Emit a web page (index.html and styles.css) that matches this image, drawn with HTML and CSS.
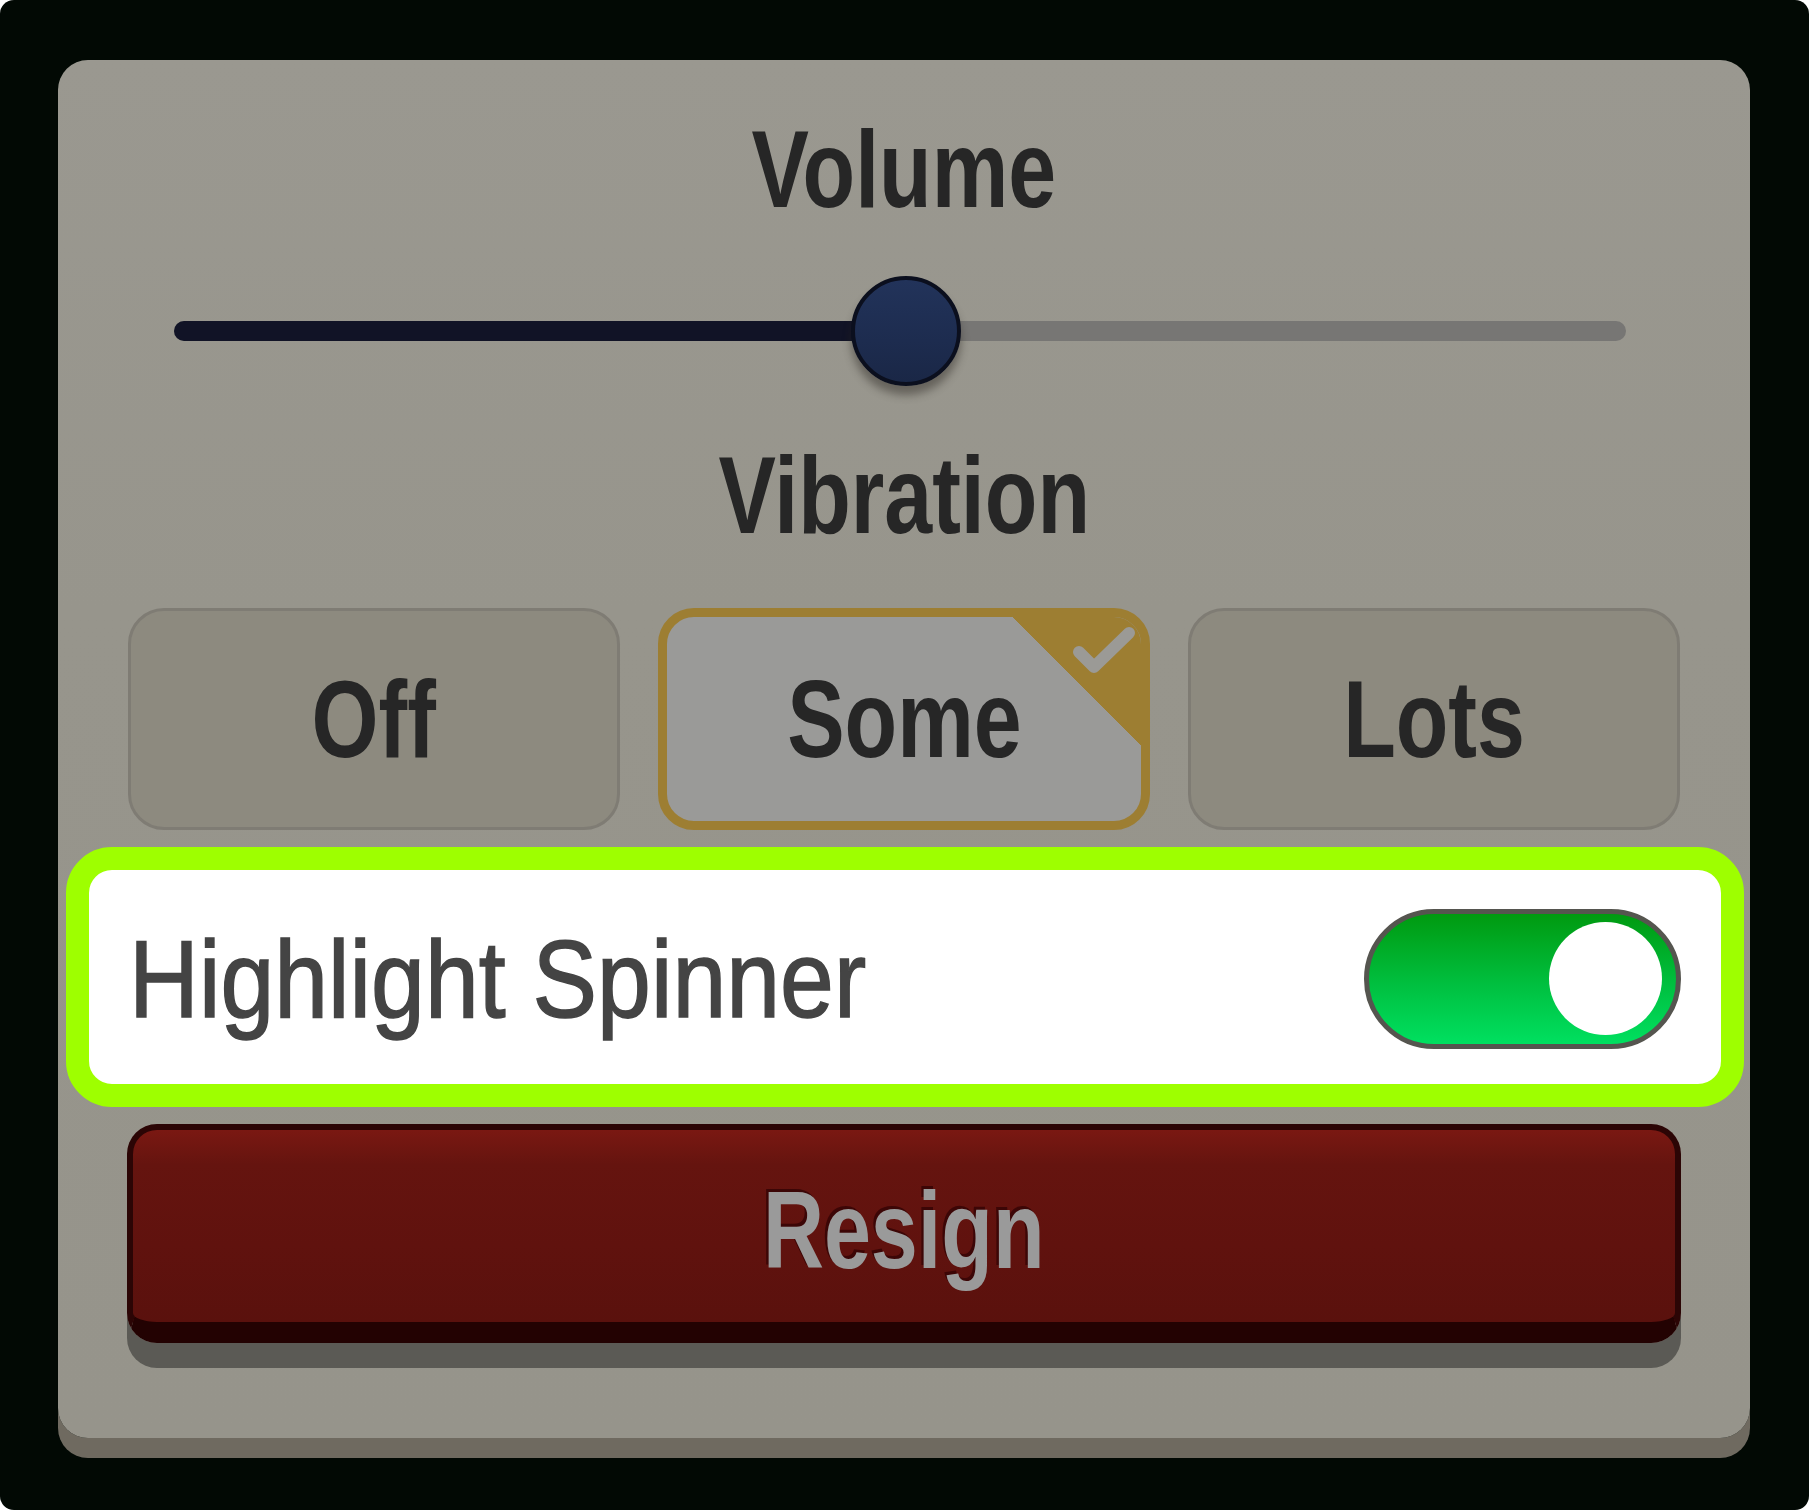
FILE: index.html
```html
<!DOCTYPE html>
<html>
<head>
<meta charset="utf-8">
<link rel="stylesheet" href="styles.css">
</head>
<body>
<div class="screen">
  <div class="panel">
    <h2 class="title"><span class="cond">Volume</span></h2>
    <div class="slider">
      <div class="track">
        <div class="track-fill" style="width:50.4%"></div>
      </div>
      <div class="knob" style="left:50.4%"></div>
    </div>
    <h2 class="title title-vibration"><span class="cond">Vibration</span></h2>
    <div class="choices">
      <div class="choice"><span class="cond">Off</span></div>
      <div class="choice choice-selected">
        <span class="corner"></span>
        <svg class="check" width="80" height="70" viewBox="0 0 80 70"><path d="M18 35 L33 50 L68 16" fill="none" stroke="#9b9a96" stroke-width="12" stroke-linecap="round" stroke-linejoin="round"/></svg>
        <span class="cond">Some</span>
      </div>
      <div class="choice"><span class="cond">Lots</span></div>
    </div>
    <div class="setting-row">
      <span class="setting-label">Highlight Spinner</span>
      <div class="toggle"><div class="toggle-knob"></div></div>
    </div>
    <div class="resign-wrap">
      <div class="resign"><span class="cond cond-resign">Resign</span></div>
    </div>
  </div>
</div>
</body>
</html>
```

FILE: styles.css
```css
html, body {
  margin: 0;
  padding: 0;
  background: #ffffff;
}
body {
  width: 1809px;
  height: 1510px;
  overflow: hidden;
}
.screen {
  width: 1809px;
  height: 1510px;
  background: #020904;
  border-radius: 14px;
  padding-top: 60px;
  box-sizing: border-box;
}
.panel {
  margin-left: 58px;
  width: 1692px;
  height: 1378px;
  box-sizing: border-box;
  padding-top: 55px;
  border-radius: 30px;
  background: linear-gradient(180deg, #9a9890 0%, #97958c 40%, #96948b 100%);
  box-shadow: 0 20px 0 #6f6a60;
  display: flex;
  flex-direction: column;
}
.cond {
  display: inline-block;
  transform: scaleX(0.79);
  transform-origin: 50% 50%;
}
.cond-resign {
  transform: scaleX(0.775);
}
.title {
  margin: 0;
  font-family: "Liberation Sans", Arial, sans-serif;
  font-weight: 700;
  font-size: 109px;
  line-height: 109px;
  height: 109px;
  color: #262626;
  text-align: center;
  white-space: nowrap;
}
.slider {
  position: relative;
  height: 110px;
  margin: 52px 124px 0 116px;
  display: flex;
  align-items: center;
}
.track {
  flex: 1;
  height: 20px;
  border-radius: 10px;
  background: #777674;
  overflow: hidden;
}
.track-fill {
  height: 100%;
  background: #111326;
}
.knob {
  position: absolute;
  top: 0;
  width: 110px;
  height: 110px;
  box-sizing: border-box;
  margin-left: -55px;
  border-radius: 50%;
  border: 4px solid #0b0f1e;
  background: linear-gradient(180deg, #22335a 0%, #1d2c4f 60%, #1a2746 100%);
  box-shadow: 0 9px 8px rgba(40, 36, 30, 0.45);
}
.title-vibration {
  margin-top: 55px;
}
.choices {
  margin: 58px 70px 0 70px;
  display: grid;
  grid-template-columns: 1fr 1fr 1fr;
  column-gap: 38px;
  height: 222px;
}
.choice {
  position: relative;
  box-sizing: border-box;
  height: 222px;
  border: 3px solid #7f7c74;
  border-radius: 36px;
  background: #8d8a7f;
  display: flex;
  align-items: center;
  justify-content: center;
  font-family: "Liberation Sans", Arial, sans-serif;
  font-weight: 700;
  font-size: 109px;
  color: #262626;
  overflow: hidden;
  white-space: nowrap;
}
.choice-selected {
  border: 9px solid #9d7e32;
  background: #9a9a98;
}
.corner {
  position: absolute;
  top: 0;
  right: 0;
  width: 129px;
  height: 129px;
  background: linear-gradient(to bottom left, #9d7e32 50%, rgba(157, 126, 50, 0) 50%);
}
.check {
  position: absolute;
  top: 0;
  right: 0;
}
.setting-row {
  margin: 17px 6px 0 8px;
  height: 260px;
  box-sizing: border-box;
  border: 23px solid #9eff00;
  border-radius: 46px;
  background: #ffffff;
  display: flex;
  align-items: center;
  justify-content: space-between;
  padding: 0 40px 0 40px;
}
.setting-label {
  display: inline-block;
  font-family: "Liberation Sans", Arial, sans-serif;
  font-weight: 400;
  font-size: 109px;
  color: #444444;
  -webkit-text-stroke: 1.5px #444444;
  padding-top: 4px;
  white-space: nowrap;
  transform: scaleX(0.888);
  transform-origin: 0 50%;
}
.toggle {
  width: 317px;
  height: 140px;
  flex-shrink: 0;
  box-sizing: border-box;
  border: 5px solid #55554f;
  border-radius: 70px;
  background: linear-gradient(180deg, #009a10 0%, #00c040 55%, #00e060 100%);
  display: flex;
  align-items: center;
  justify-content: flex-end;
  padding-right: 14px;
  margin-top: 3px;
}
.toggle-knob {
  width: 113px;
  height: 113px;
  border-radius: 50%;
  background: #ffffff;
}
.resign-wrap {
  margin: 17px 69px 0 69px;
}
.resign {
  height: 219px;
  box-sizing: border-box;
  border: 6px solid #2b0505;
  border-bottom: 21px solid #230202;
  border-radius: 30px;
  background: linear-gradient(180deg, #7a1812 0%, #65140f 18%, #60120e 60%, #5a110d 100%);
  box-shadow: 0 25px 0 #5b5a55;
  display: flex;
  align-items: center;
  justify-content: center;
  font-family: "Liberation Sans", Arial, sans-serif;
  font-weight: 700;
  font-size: 109px;
  color: #9a9a9a;
  text-shadow: -3px -3px 0 #3c0606;
  padding-top: 8px;
  white-space: nowrap;
}
```
